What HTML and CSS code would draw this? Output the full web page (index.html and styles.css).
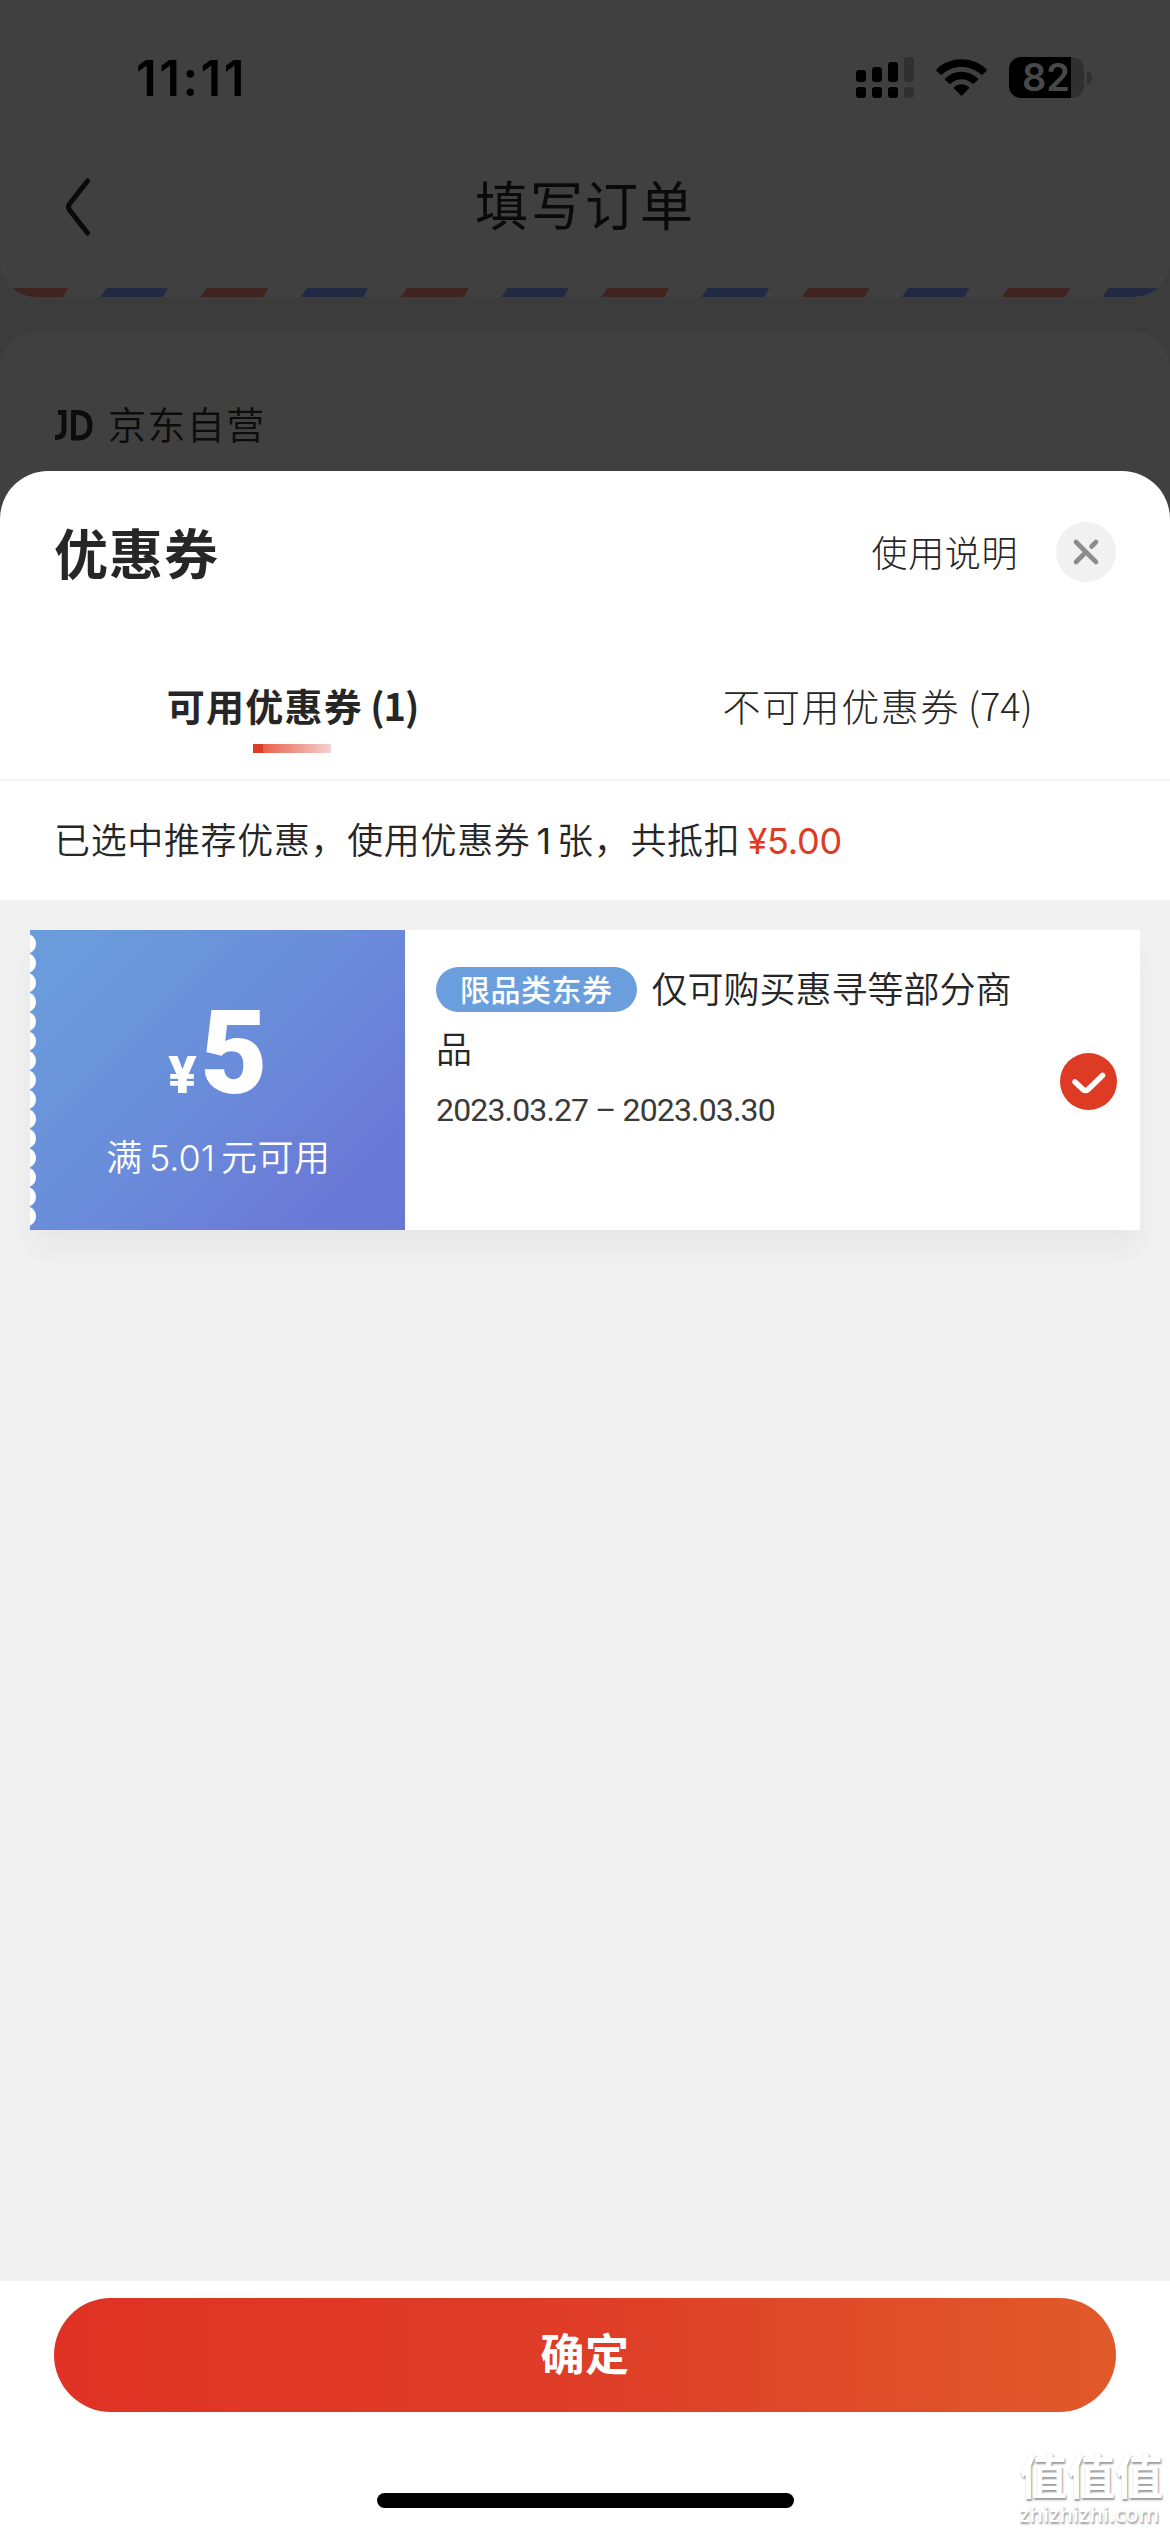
FILE: index.html
```html
<!DOCTYPE html>
<html lang="zh-CN">
<head>
<meta charset="utf-8">
<title>填写订单</title>
<link rel="stylesheet" href="styles.css">
</head>
<body>
<div class="screen">
  <header class="page-head">
    <div class="status-bar">
      <span class="clock">11:11</span>
      <div class="status-icons">
        <svg class="signal" viewBox="0 0 58 41" width="58" height="41">
          <g fill="#000"><rect x="0" y="13" width="10" height="12" rx="3"/><rect x="16" y="10" width="10" height="15" rx="3"/><rect x="32" y="5" width="10" height="20" rx="3"/><rect x="0" y="30" width="10" height="11" rx="3"/><rect x="16" y="30" width="10" height="11" rx="3"/><rect x="32" y="30" width="10" height="11" rx="3"/></g>
          <g fill="#303030"><rect x="48" y="0" width="10" height="25" rx="3"/><rect x="48" y="30" width="10" height="11" rx="3"/></g>
        </svg>
        <svg class="wifi" viewBox="0 0 51 37" width="51" height="37">
          <path d="M.6 10.2C14.5-3 36.5-3 50.4 10.2q.8.9 0 1.7l-3.700 3.700q-.8.800-1.700 0C34 5.500 17 5.500 6 15.600q-.9.800-1.700 0L.6 11.900q-.8-.8 0-1.700zM9.200 19.200c9.400-8.600 23.200-8.600 32.600 0q.9.800 0 1.700l-3.900 3.700q-.8.800-1.700 0c-6.300-5.700-15.100-5.700-21.400 0q-.9.800-1.700 0l-3.900-3.700q-.9-.9 0-1.700zM18.200 27.900c4.400-3.500 10.200-3.500 14.600 0q.9.800.1 1.600l-6.500 6.700q-.9.900-1.800 0l-6.500-6.700q-.8-.8.1-1.600z"/>
        </svg>
        <div class="battery">
          <div class="battery-body"><span class="battery-level">82</span></div>
          <svg viewBox="0 0 5 14" width="5" height="14"><path d="M0 0q5 2 5 7t-5 7z" fill="#303030"/></svg>
        </div>
      </div>
    </div>
    <nav class="nav-bar">
      <svg class="back" viewBox="0 0 26 58" width="26" height="58"><path d="M22.500 3L4.500 26q-2 3 0 6L22.500 55" fill="none" stroke="#0a0a0a" stroke-width="5" stroke-linecap="round" stroke-linejoin="round"/></svg>
      <h1>填写订单</h1>
    </nav>
    <svg class="airmail" viewBox="0 0 1170 9" width="1170" height="9">
      <defs>
        <pattern id="stripe" width="200.4" height="9" patternUnits="userSpaceOnUse">
          <path d="M6.500 0H68L63 9H0z" fill="#40221f"/>
          <path d="M106.500 0H168L163 9H100.200z" fill="#212a42"/>
        </pattern>
      </defs>
      <rect width="1170" height="9" fill="url(#stripe)"/>
    </svg>
  </header>
  <section class="shop-card">
    <svg class="jd" viewBox="0 0 38 31" width="38" height="31"><g fill="none" stroke="#0c0c0c" stroke-width="5"><path d="M3 2.500H9V20q0 7.500-9 7.500"/><path d="M18.500 2.500h5q11.500 1 11.500 13t-11.500 12.500h-5z"/></g></svg>
    <span>京东自营</span>
  </section>

  <main class="sheet">
    <div class="sheet-head">
      <h2>优惠券</h2>
      <a class="guide">使用说明</a>
      <button class="close" aria-label="关闭">
        <svg viewBox="0 0 60 60" width="60" height="60"><g fill="none" stroke="#8c8c8c" stroke-width="4.600" stroke-linecap="round"><path d="M20 20l20 20M20 40L30 30M35.500 24.500L40 20"/></g></svg>
      </button>
    </div>
    <div class="tabs">
      <div class="tab active">可用优惠券<span class="count">(1)</span></div>
      <div class="tab">不可用优惠券<span class="count">(74)</span></div>
    </div>
    <p class="notice">已选中推荐优惠，使用优惠券<span class="num">1</span>张，共抵扣<span class="deduct">¥5.00</span></p>
    <div class="list">
      <article class="coupon">
        <div class="face">
          <svg class="teeth" viewBox="0 0 6 300" width="6" height="300">
            <defs><pattern id="tooth" y="3.970" width="6" height="19.470" patternUnits="userSpaceOnUse"><path d="M0 .5Q6 3.500 6 9.735T0 19z" fill="#fff"/></pattern></defs>
            <rect y="3.970" width="6" height="292.050" fill="url(#tooth)"/>
          </svg>
          <div class="amount"><span class="yen">¥</span><span class="value">5</span></div>
          <div class="limit">满<span class="num">5.01</span>元可用</div>
        </div>
        <div class="info">
          <p class="desc"><span class="tag">限品类东券</span>仅可购买惠寻等部分商品</p>
          <p class="date">2023.03.27 – 2023.03.30</p>
        </div>
        <svg class="check" viewBox="0 0 57 57" width="57" height="57"><circle cx="28.500" cy="28.500" r="28.500" fill="#dd3b24"/><path d="M15 29l8 7.500q2.500 2 5 0L42.500 22.500" fill="none" stroke="#fff" stroke-width="5.500" stroke-linecap="round" stroke-linejoin="round"/></svg>
      </article>
    </div>
    <footer class="actions">
      <button class="confirm">确定</button>
      <div class="home-bar"></div>
      <div class="watermark"><span class="wm-name">值值值</span><span class="wm-site">zhizhizhi.com</span></div>
    </footer>
  </main>
</div>
</body>
</html>
```

FILE: styles.css
```css
* { box-sizing: border-box; margin: 0; padding: 0; }
body { width: 1170px; height: 2532px; overflow: hidden; font-family: "Noto Sans CJK SC", sans-serif; color: #262626; }
svg { display: block; flex: none; }
button { border: 0; font-family: inherit; }

.screen { display: flex; flex-direction: column; height: 2532px; background: #3c3c3c; }

.page-head { height: 297px; flex: none; background: #404040; border-radius: 0 0 36px 36px; overflow: hidden; }
.status-bar { display: flex; justify-content: space-between; align-items: flex-start; height: 145px; padding: 57px 78px 0 136px; color: #000; }
.clock { font: 600 49px/43px Inter, sans-serif; letter-spacing: 2.5px; }
.status-icons { display: flex; align-items: flex-start; }
.wifi { margin: 2px 22px 0; }
.battery { display: flex; align-items: center; gap: 3px; }
.battery-body { display: flex; align-items: center; width: 75px; height: 41px; border-radius: 12px; padding-left: 13px; background: linear-gradient(90deg, #000 62px, #303030 62px); }
.battery-level { font: 600 38px/41px Inter, sans-serif; color: #484848; }

.nav-bar { display: grid; grid-template-columns: 1fr auto 1fr; align-items: center; height: 143px; padding: 0 65px; }
.nav-bar h1 { font-size: 53px; font-weight: 400; line-height: 80px; letter-spacing: 2px; margin-top: -27px; color: #0a0a0a; }
.back { margin-top: -20px; }

.shop-card { display: flex; align-items: flex-start; gap: 15px; flex: none; height: 187px; margin: 35px 0 -48px; padding: 78px 55px 0; border-radius: 36px 36px 0 0; background: #404040; font-size: 38px; font-weight: 350; line-height: 25px; letter-spacing: 1.4px; color: #0c0c0c; }

.sheet { display: flex; flex-direction: column; flex: 1; background: #fff; border-radius: 48px 48px 0 0; overflow: hidden; }
.sheet-head { display: flex; align-items: center; height: 164px; padding: 0 54px 2px; }
.sheet-head h2 { flex: 1; font-size: 54px; font-weight: 600; line-height: 82px; letter-spacing: 1px; }
.guide { font-size: 36px; font-weight: 300; line-height: 54px; letter-spacing: .6px; margin: -3px 38px 0 0; }
.close { width: 60px; height: 60px; border-radius: 30px; background: #f1f1f1; }

.tabs { display: grid; grid-template-columns: 1fr 1fr; height: 146px; border-bottom: 2px solid #f6f6f6; }
.tab { display: flex; justify-content: center; padding-top: 40px; font-size: 38px; font-weight: 300; line-height: 60px; letter-spacing: 1.6px; position: relative; }
.tab.active { font-weight: 600; letter-spacing: 1.3px; }
.count { margin-left: 8px; letter-spacing: 0; }
.active .count { margin-left: 7px; letter-spacing: -1px; }
.tab.active::after { content: ""; position: absolute; left: 253px; top: 109px; width: 78px; height: 9px; background: linear-gradient(90deg, #dd3c26 10px, #e8624b 10px, #f4d2d0); }

.notice { height: 119px; padding: 0 54px; font-size: 36px; font-weight: 350; line-height: 115px; letter-spacing: .65px; white-space: nowrap; }
.num { margin: 0 6px; font-family: Inter, sans-serif; font-weight: 400; letter-spacing: 0; }
.deduct { margin-left: 7px; color: #dd3b24; font-family: Inter, sans-serif; font-weight: 400; letter-spacing: -.2px; }

.list { flex: 1; padding: 30px; background: #f1f1f1; }
.coupon { display: flex; height: 300px; background: #fff; box-shadow: 0 20px 30px rgba(0, 0, 0, .045); }
.face { position: relative; display: flex; flex-direction: column; align-items: center; width: 375px; background: linear-gradient(135deg, #6a9bdb 10%, #6a8cda 50%, #6a7ad6 82%, #6977d4); color: #fff; }
.teeth { position: absolute; left: 0; top: 0; }
.amount { display: flex; align-items: baseline; gap: 3px; height: 200px; padding-top: 53px; font-weight: 700; }
.yen { font-family: Inter, sans-serif; font-size: 51px; font-weight: 800; }
.value { font-family: Roboto, sans-serif; font-weight: 900; font-size: 116px; line-height: 140px; }
.limit { padding-left: 2px; font-size: 36px; font-weight: 350; line-height: 50px; letter-spacing: .6px; }
.limit .num { margin: 0 6px; font-weight: 300; }
.info { flex: 1; padding: 27px 0 0 31px; }
.desc { font-size: 36px; font-weight: 350; line-height: 60px; }
.tag { display: inline-block; height: 45px; margin-right: 15px; padding: 0 24px; border-radius: 23px; background: #6b9edc; color: #fff; font-size: 30px; font-weight: 500; line-height: 43px; letter-spacing: .5px; vertical-align: 2px; }
.date { font: 400 32px/66px Roboto, sans-serif; letter-spacing: -.85px; color: #3a3a3a; }
.check { align-self: center; margin: 3px 23px 0 40px; }

.actions { position: relative; height: 251px; padding: 17px 54px 24px; display: flex; flex-direction: column; align-items: center; justify-content: space-between; }
.confirm { width: 100%; height: 114px; padding-bottom: 5px; border-radius: 57px; background: linear-gradient(90deg, #df3224, #de3d27 50%, #e05a2a); color: #fff; font-size: 44px; font-weight: 700; line-height: 109px; letter-spacing: .5px; }
.home-bar { width: 417px; height: 15px; border-radius: 8px; background: #000; }
.watermark { position: absolute; right: 7px; bottom: 6px; display: flex; flex-direction: column; gap: 3px; color: #fff; text-shadow: 1px 2px 2px #999, 0 0 1px #ddd; }
.wm-name { font-size: 48px; font-weight: 700; line-height: 52px; }
.wm-site { font: 600 21.5px/24px "Open Sans", sans-serif; }
```
